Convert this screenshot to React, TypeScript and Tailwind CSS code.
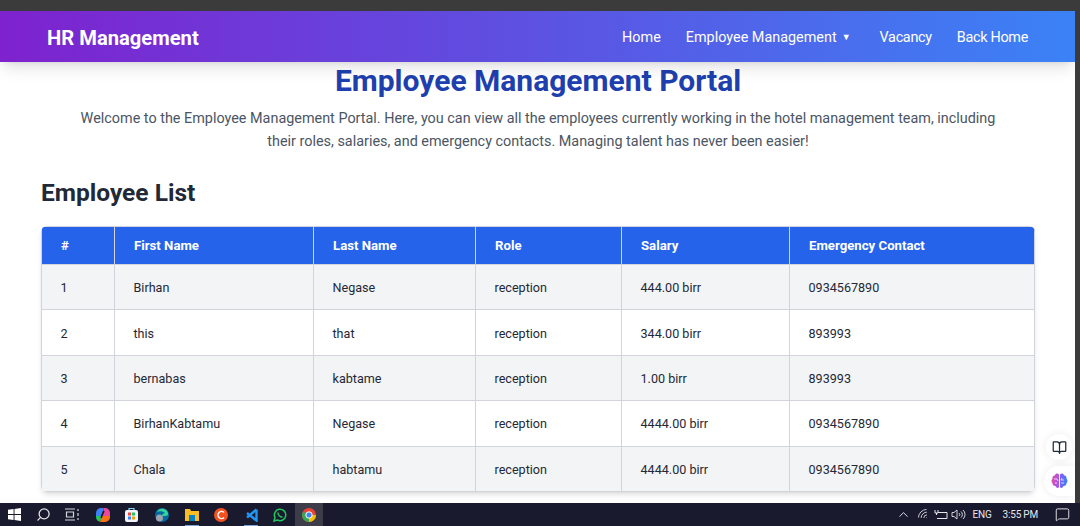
import React from 'react';
import { BookOpen, ChevronUp, Search, Wifi, MessageSquare } from 'lucide-react';

const rows = [
  { id: 1, first: 'Birhan', last: 'Negase', role: 'reception', salary: '444.00 birr', contact: '0934567890' },
  { id: 2, first: 'this', last: 'that', role: 'reception', salary: '344.00 birr', contact: '893993' },
  { id: 3, first: 'bernabas', last: 'kabtame', role: 'reception', salary: '1.00 birr', contact: '893993' },
  { id: 4, first: 'BirhanKabtamu', last: 'Negase', role: 'reception', salary: '4444.00 birr', contact: '0934567890' },
  { id: 5, first: 'Chala', last: 'habtamu', role: 'reception', salary: '4444.00 birr', contact: '0934567890' },
];

const headers = ['#', 'First Name', 'Last Name', 'Role', 'Salary', 'Emergency Contact'];

const Slot: React.FC<{ w: string; running?: boolean; children: React.ReactNode }> = ({ w, running, children }) => (
  <div className={`${w} h-full flex justify-center items-center relative`}>
    {children}
    {running && <span className="absolute bottom-0 w-[14px] h-px bg-[#7fa6dc]" />}
  </div>
);

const Taskbar: React.FC = () => (
  <div className="h-[23px] shrink-0 bg-[#1a1a2e] flex items-center text-[#e5e7eb] relative z-10">
    <Slot w="w-[29px]">
      <svg width="13" height="13" viewBox="0 0 14 14" fill="#fff">
        <path d="M0 2l6-.9V6.500H0zM7 1l7-1v6.500H7zM0 7.500h6v5.400l-6-.9zM7 7.500h7V14l-7-1z" />
      </svg>
    </Slot>
    <Slot w="w-[28px]">
      <Search size={15} strokeWidth={2} className="-scale-x-100" />
    </Slot>
    <Slot w="w-[30px]">
      <svg width="14" height="13" viewBox="0 0 14 13" fill="none" stroke="#d1d5db" strokeWidth="1.200">
        <path d="M0 1h10M0 12h10M1.500 4h7v5h-7zM13 1v2M13 5v3M13 10v2" />
      </svg>
    </Slot>
    {/* copilot */}
    <Slot w="w-[31px]">
      <svg width="14" height="14" viewBox="0 0 14 14" className="rounded-[5px]">
        <path d="M0 0h8L5 8H0z" fill="#3b82f6" />
        <path d="M8 0h6v8H6z" fill="#ec4899" />
        <path d="M0 8h6l-2 6H0z" fill="#22c55e" />
        <path d="M6 8h8v6H4z" fill="#f97316" />
        <path d="M5 10l3-7" stroke="#1c1917" strokeWidth="1.500" />
      </svg>
    </Slot>
    {/* store */}
    <Slot w="w-[27px]">
      <svg width="13" height="15" viewBox="0 0 13 15" fill="none">
        <path d="M4 3V1.500h5V3" stroke="#7dd3fc" strokeWidth="1.200" />
        <rect x="0" y="3" width="13" height="12" rx="2" fill="#f3f4f6" />
        <rect x="3" y="5.500" width="3" height="3" fill="#ef4444" />
        <rect x="7" y="5.500" width="3" height="3" fill="#22c55e" />
        <rect x="3" y="9.500" width="3" height="3" fill="#3b82f6" />
        <rect x="7" y="9.500" width="3" height="3" fill="#f59e0b" />
      </svg>
    </Slot>
    {/* edge with profile badge */}
    <Slot w="w-[33px]">
      <svg width="14" height="14" viewBox="0 0 14 14">
        <circle cx="7" cy="7" r="7" fill="#0369a1" />
        <path d="M2 4a6 6 0 0 1 11 1c.8 2-1 3-2.500 3H7c0-2 2-3 3-3-2-2-6-2-8-1z" fill="#34d399" />
        <circle cx="4.500" cy="10" r="3.500" fill="#9ca3af" />
      </svg>
    </Slot>
    <Slot w="w-[27px]" running>
      <svg width="14" height="13" viewBox="0 0 14 13">
        <path d="M0 1h5l1 2h8v10H0z" fill="#fbbf24" />
        <rect x="4" y="7" width="6" height="6" fill="#0284c7" />
      </svg>
    </Slot>
    <Slot w="w-[31px]">
      <svg width="14" height="14" viewBox="0 0 14 14">
        <circle cx="7" cy="7" r="7" fill="#f4511e" />
        <path d="M10 4.500A3.500 3.500 0 1 0 10 9.500" fill="none" stroke="#fff" strokeWidth="1.500" />
      </svg>
    </Slot>
    <Slot w="w-[29px]" running>
      <svg width="14" height="14" viewBox="0 0 14 14" fill="none" stroke="#2196f3" strokeWidth="2.400">
        <path d="M12.500 1.500v11L3 5M12.500 1.500L3 9.500" />
      </svg>
    </Slot>
    <Slot w="w-[30px]">
      <svg width="14" height="14" viewBox="0 0 14 14" fill="none" stroke="#22c55e" strokeWidth="1.500">
        <path d="M1 13l1-3.500A5.700 5.700 0 1 1 4.500 12z" />
        <path d="M5 4.500c0 2.500 2 4.500 4.500 4.500" />
      </svg>
    </Slot>
    <div className="w-[28px] h-full bg-[#3d3d4a] flex justify-center items-center">
      <svg width="14" height="14" viewBox="0 0 14 14">
        <circle cx="7" cy="7" r="7" fill="#ea4335" />
        <path d="M7 14a7 7 0 0 1-6-10.500L7 7z" fill="#34a853" />
        <path d="M14 7a7 7 0 0 1-7 7L7 7z" fill="#fbbc05" />
        <circle cx="7" cy="7" r="3.200" fill="#4285f4" stroke="#fff" />
      </svg>
    </div>

    {/* system tray */}
    <div className="ml-auto flex items-center h-full text-[10px] tracking-[-0.2px]">
      <ChevronUp size={15} strokeWidth={1.500} />
      <Wifi size={13} strokeWidth={1.500} className="ml-[6px] -rotate-45" />
      <svg width="14" height="11" viewBox="0 0 14 11" fill="none" stroke="#e5e7eb" className="ml-[4px]">
        <path d="M4 3.500h9v6H3M1 1v3h3V1M2.500 4v2" />
      </svg>
      <svg width="15" height="11" viewBox="0 0 15 11" fill="none" stroke="#e5e7eb" strokeWidth="0.900" className="ml-[3px]">
        <path d="M1 3.500h2L6 1v9L3 7.500H1zM8 4a2 2 0 0 1 0 3M10 2.500a4 4 0 0 1 0 6M12 1a6 6 0 0 1 0 9" />
      </svg>
      <span className="ml-[7px]">ENG</span>
      <span className="ml-[11px]">3:55 PM</span>
      <MessageSquare size={15} strokeWidth={1.500} className="ml-[17px] mr-[10px]" />
    </div>
  </div>
);

const App: React.FC = () => {
  return (
    <div className="h-[526px] w-[1080px] flex flex-col overflow-hidden bg-[#3b3b3b] relative font-['Roboto',sans-serif]">
      <div className="h-[11px] shrink-0 bg-[#3b3b3b]" />

      <div className="flex-1 min-h-0 flex">
        <div className="w-[1075px] flex flex-col overflow-hidden bg-white">
          {/* Navbar */}
          <nav className="h-[51px] shrink-0 bg-[linear-gradient(to_right,#7e22ce,#3b82f6)] shadow-lg flex items-center justify-between pl-[47px] pr-[47px] relative">
            <span className="text-white font-bold text-[20.200px] pt-[3px]">HR Management</span>
            <ul className="flex items-center gap-[25px] pt-[2px] text-white text-[14.400px]">
              <li>Home</li>
              <li className="flex items-center mr-[4px]">
                Employee Management
                <span className="ml-[5px] text-[9px]">▼</span>
              </li>
              <li className="tracking-[-0.3px]">Vacancy</li>
              <li className="tracking-[-0.3px]">Back Home</li>
            </ul>
          </nav>

          <main className="pl-[41px] pr-[40px] pt-[1px]">
            <h1 className="text-[30px] leading-[36px] font-bold text-[#1e40af] text-center">Employee Management Portal</h1>
            <p className="text-[14.400px] leading-[23px] text-[#4b5563] text-center mt-[8px] px-[36px]">
              Welcome to the Employee Management Portal. Here, you can view all the employees currently working in the hotel management team, including their roles, salaries, and emergency contacts. Managing talent has never been easier!
            </p>
            <h2 className="text-[24.500px] leading-[32px] font-bold text-[#1f2937] mt-[24px]">Employee List</h2>

            <div className="mt-[17px] rounded-md overflow-hidden shadow-md">
              <table className="w-full table-fixed border-collapse text-[12.600px] text-[#1f2937]">
                <colgroup>
                  <col className="w-[73px]" />
                  <col className="w-[199px]" />
                  <col className="w-[162px]" />
                  <col className="w-[146px]" />
                  <col className="w-[168px]" />
                  <col />
                </colgroup>
                <thead>
                  <tr className="h-[38px] bg-[#2563eb] text-white text-[13.200px]">
                    {headers.map((h) => (
                      <th key={h} className="text-left font-bold px-[19px] border border-[#d1d5db]">{h}</th>
                    ))}
                  </tr>
                </thead>
                <tbody>
                  {rows.map((r) => (
                    <tr key={r.id} className={`h-[45.400px] ${r.id % 2 === 1 ? 'bg-[#f3f4f6]' : 'bg-white'}`}>
                      <td className="pl-[18.500px] pr-[19px] pt-[3px] border border-[#d1d5db]">{r.id}</td>
                      <td className="pl-[18.500px] pr-[19px] pt-[3px] border border-[#d1d5db]">{r.first}</td>
                      <td className="pl-[18.500px] pr-[19px] pt-[3px] border border-[#d1d5db]">{r.last}</td>
                      <td className="pl-[18.500px] pr-[19px] pt-[3px] border border-[#d1d5db]">{r.role}</td>
                      <td className="pl-[18.500px] pr-[19px] pt-[3px] border border-[#d1d5db]">{r.salary}</td>
                      <td className="pl-[18.500px] pr-[19px] pt-[3px] border border-[#d1d5db]">{r.contact}</td>
                    </tr>
                  ))}
                </tbody>
              </table>
            </div>
          </main>
        </div>
      </div>

      <Taskbar />

      {/* floating side buttons */}
      <div className="absolute left-[1046px] top-[434px] w-[26px] h-[26px] rounded-full bg-white shadow-[0_0_8px_rgba(0,0,0,0.08)] flex items-center justify-center">
        <BookOpen size={15} className="text-[#1f2937]" />
      </div>
      <div className="absolute left-[1044px] top-[466px] w-[31px] h-[30px] rounded-l-full bg-white shadow-[0_0_8px_rgba(0,0,0,0.08)] flex items-center pl-[7px]">
        <svg width="17" height="16" viewBox="0 0 17 16">
          <defs>
            <linearGradient id="lobeL" x1="0" y1="0" x2="1" y2="0.300">
              <stop offset="0" stopColor="#e8508f" />
              <stop offset="1" stopColor="#a855f7" />
            </linearGradient>
            <linearGradient id="lobeR" x1="0" y1="0" x2="1" y2="0.300">
              <stop offset="0" stopColor="#8b5cf6" />
              <stop offset="1" stopColor="#3b82f6" />
            </linearGradient>
          </defs>
          <path d="M8 1.500C6.500 0 4.500.5 4 2.200 2 2.500 1 4.200 1.500 5.800.2 7 .2 9.200 1.500 10.200 1.500 12 3 13.200 4.500 13c.7 2 2.500 2.500 3.500 1.300z" fill="url(#lobeL)" />
          <path d="M9 1.500c1.500-1.500 3.500-1 4 .7 2 .3 3 2 2.500 3.600 1.300 1.200 1.300 3.400 0 4.400 0 1.800-1.500 3-3 2.800-.7 2-2.500 2.500-3.500 1.300z" fill="url(#lobeR)" />
          <path d="M3 6h3l1 2M4 10h2M11 5l-1 2h3M10 10h3" stroke="#fff" strokeWidth="0.700" fill="none" />
        </svg>
      </div>
    </div>
  );
};

export default App;
